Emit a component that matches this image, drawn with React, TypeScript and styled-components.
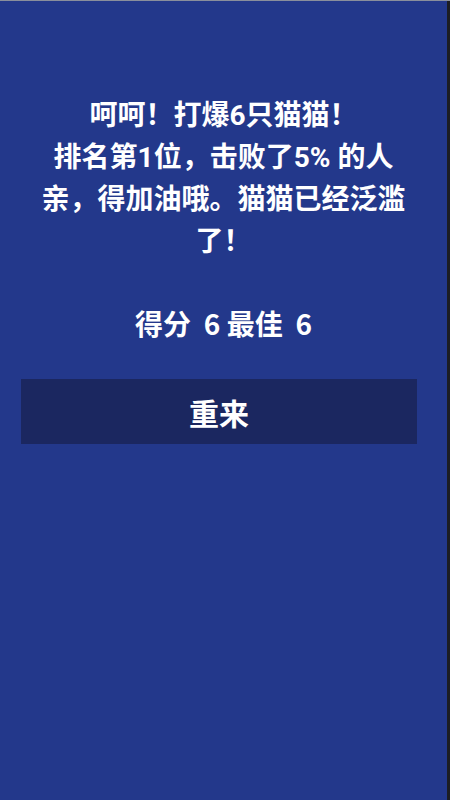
import { FC } from "react";
import styled, { createGlobalStyle } from "styled-components";

const GlobalStyle = createGlobalStyle`
    html, body {
        margin: 0;
        padding: 0;
        background: #23388b;
    }
    * {
        box-sizing: border-box;
    }
`;

const Screen = styled.div`
    display: flex;
    width: 450px;
    height: 800px;
    border-top: 1px solid #8a8f9c;
    background: #23388b;
    font-family: Roboto, "Noto Sans CJK SC", sans-serif;
    color: #ffffff;
`;

const Main = styled.main`
    flex: 1;
    display: flex;
    flex-direction: column;
    align-items: center;
    padding-top: 94px;
`;

const Edge = styled.div`
    flex: 0 0 3px;
    background: #1c1d22;
`;

const Message = styled.p`
    width: 366px;
    margin: 0;
    font-size: 28px;
    font-weight: 700;
    line-height: 42px;
    text-align: center;
`;

const Score = styled.p`
    margin: 42px 0 0;
    font-family: "Noto Sans CJK SC", sans-serif;
    font-size: 28px;
    font-weight: 700;
    line-height: 36px;
    white-space: pre;
`;

const RetryButton = styled.button`
    align-self: flex-start;
    width: 396px;
    height: 65px;
    margin: 38px 0 0 21px;
    border: none;
    background: #1b2760;
    color: #ffffff;
    font-family: "Noto Sans CJK SC", sans-serif;
    font-size: 30px;
    font-weight: 700;
`;

const App: FC = () => {
    return (
        <>
            <GlobalStyle />
            <Screen>
                <Main>
                    <Message>
                        呵呵！打爆6只猫猫！
                        <br />
                        排名第1位，击败了5% 的人亲，得加油哦。猫猫已经泛滥了！
                    </Message>
                    <Score>{"得分  6 最佳  6"}</Score>
                    <RetryButton>重来</RetryButton>
                </Main>
                <Edge />
            </Screen>
        </>
    );
};

export default App;
